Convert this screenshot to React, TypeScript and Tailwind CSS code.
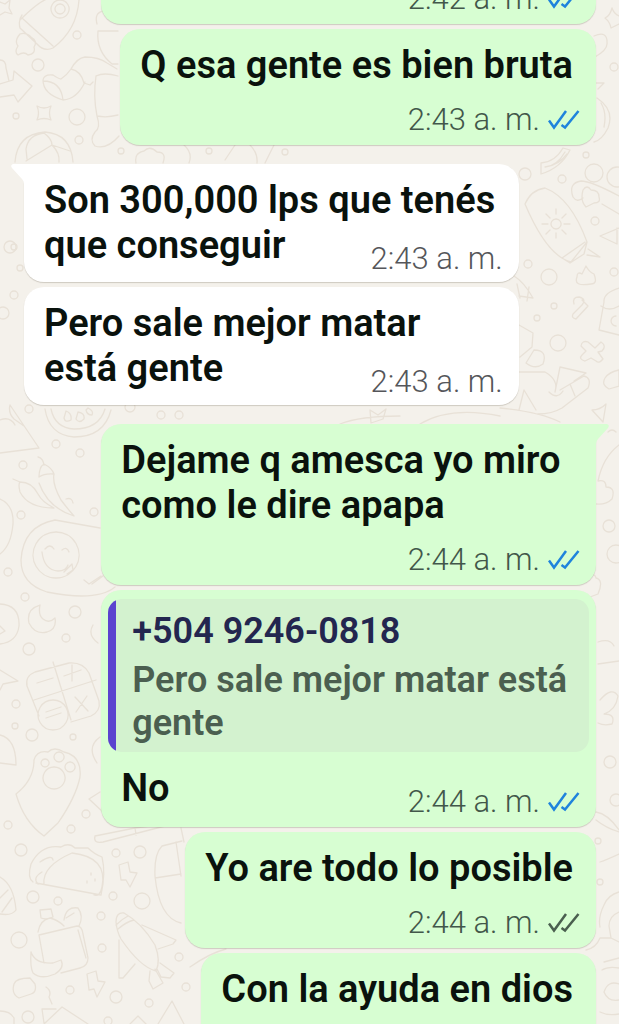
import type { ReactNode } from 'react';

type TickState = 'read' | 'delivered';

interface BubbleProps {
    lines?: string[];
    time?: string;
    sent?: boolean;
    tail?: boolean;
    inlineTime?: boolean; // time shares the last text line
    ticks?: TickState;
    className?: string;
    children?: ReactNode;
}

function Ticks({ state }: { state: TickState }) {
    return (
        <svg
            viewBox="0 0 32 20"
            role="img"
            aria-label={state === 'read' ? 'Leído' : 'Entregado'}
            className={`h-5 w-8 shrink-0 ${state === 'read' ? 'text-[#1f83dc]' : 'text-[#4a5f4f]'}`}
            fill="none"
            stroke="currentColor"
            strokeWidth="2.5"
        >
            <path d="M1 10.5 6 17.5 18 1M13.5 15 17 17.5 30.5 1" />
        </svg>
    );
}

function Tail({ sent }: { sent: boolean }) {
    return (
        <svg
            viewBox="0 0 15 20"
            aria-hidden="true"
            className={`absolute top-0 h-5 w-[15px] ${sent ? '-right-[14px] text-[#d7fed2]' : '-left-[14px] -scale-x-100 text-white'}`}
            fill="currentColor"
        >
            <path d="M0 0H12Q15 1 13 4L3 15Q1 17 1 20H0Z" />
        </svg>
    );
}

function Bubble({
    lines,
    time,
    sent = false,
    tail = false,
    inlineTime = false,
    ticks,
    className = '',
    children
}: BubbleProps) {
    return (
        <li
            className={`
                relative flex flex-col rounded-[20px] shadow-[0_1px_1px_rgba(60,50,30,0.2)]
                ${sent ? 'self-end bg-[#d7fed2] pb-[7px]' : 'self-start bg-white pb-[5px]'}
                ${tail ? (sent ? 'rounded-tr-none' : 'rounded-tl-none') : ''}
                ${className}
            `}
        >
            {tail && <Tail sent={sent} />}
            {children}
            {lines && (
                <p className="mt-[14px] pr-[23px] pl-5 text-[38px] leading-[45px] font-semibold text-[#0a120d]">
                    {lines.map((line) => (
                        <span key={line} className="block w-fit">{line}</span>
                    ))}
                </p>
            )}
            {time && (
                <div
                    className={`
                        flex items-center justify-end gap-2 pr-4 text-[31px] leading-9 font-light
                        ${sent ? 'text-[#42574a]' : 'text-[#55565a]'}
                        ${inlineTime ? '-mt-[27px]' : 'mt-[14px]'}
                    `}
                >
                    <time>{time}</time>
                    {ticks && <Ticks state={ticks} />}
                </div>
            )}
        </li>
    );
}

function Quote({ author, text }: { author: string; text: string }) {
    return (
        <blockquote className="mx-[7px] mt-[9px] flex overflow-hidden rounded-[14px] bg-[#d3f2cf] text-[36px] leading-[43px] font-semibold">
            <div className="w-2 shrink-0 bg-[#5b43cf]" />
            <div className="pt-[11px] pb-[7px] pl-4">
                <cite className="block text-[#23264f] not-italic">{author}</cite>
                <p className="mt-[6px] text-[#4b5f50]">{text}</p>
            </div>
        </blockquote>
    );
}

// Small circles scattered over the wallpaper: x, y, radius
const DOTS = [
    [77, 35, 4], [38, 65, 6], [77, 117, 8], [16, 116, 3], [79, 140, 4], [121, 151, 3], [209, 151, 3], [285, 152, 3],
    [14, 247, 3], [10, 247, 6], [20, 268, 3], [14, 295, 4], [3, 313, 6],
    [525, 174, 6], [562, 179, 4], [594, 173, 9], [617, 177, 10], [595, 221, 4], [549, 277, 8], [528, 264, 4],
    [614, 272, 4], [554, 306, 3], [537, 318, 3], [558, 343, 8], [586, 155, 3], [614, 67, 4],
    [29, 409, 4], [56, 444, 4], [80, 453, 4], [23, 465, 4], [161, 415, 4], [179, 415, 4], [130, 407, 5],
    [21, 515, 4], [94, 512, 4], [8, 572, 4], [25, 597, 4], [75, 612, 6], [66, 638, 4], [29, 649, 6],
    [16, 704, 4], [15, 726, 3], [32, 735, 6], [73, 737, 3], [86, 814, 4], [8, 825, 4], [71, 829, 4],
    [21, 850, 6], [116, 853, 4], [140, 852, 6], [113, 896, 4], [142, 901, 8], [33, 897, 6], [58, 901, 4],
    [101, 916, 4], [19, 940, 8], [102, 948, 4], [179, 957, 4], [116, 997, 6], [70, 990, 4], [149, 1003, 4],
    [186, 987, 4], [28, 1017, 6], [108, 1021, 4], [609, 526, 6], [610, 762, 6], [616, 800, 6], [598, 841, 3],
    [600, 882, 3], [616, 554, 9]
];

const DOODLES = [
    // rocket
    'M20 20Q40 0 50-2M79 0Q77 30 53 48 44 52 37 44L20 28Q18 20 22 15M22 18 53 46M60 0a9 9 0 1 0 .1 0M60 4a5 5 0 1 0 .1 0M20 34q-6 7-2 12-4 6 0 9 6-4 10 0 8-1 6-8 4-6-3-10-5-5-11-3',
    // star and arrow
    'M0 2l5 2 5-4-1 8 3 6-7-2-5 3M0 84 13 80 14 71 32 86 18 102 14 95 0 97M0 60q6 0 6 8l3 13',
    // sock
    'M43 80q1-6 10-5 6 4 8 4 6-4 10-10 6-11 14-12 14 0 22 6l10 6M43 80q0 14 20 20 14-1 22-18M43 81q18 0 20 19M71 69q10 2 13 14l6 2 3-3',
    // bottle
    'M98 31h20M98 31q-2 20 14 33l6 0M97 24q-3-11 6-13l5 6M96 76q8-4 22 0M96 76q-3 20 1 40 10 2 21-1M97 116q4 12-2 16-6 8 0 14 12 4 24-10',
    // sparkle and ball
    'M37 106q7 4 14 0-3 7 0 14-7-3-14 0 3-7 0-14M15 162q2-28 30-30 26 2 28 30M26 149q2-14 18-16 8 6 8 12l-26 16M52 145l18 6M52 145q8 8 7 17M26 149l1 10',
    'M136 163q-2-10 8-12 6-6 13 1 10 0 6 11M184 145q9 8 5 18M225 160l10-15M250 145q8 8 7 18M265 163l9-18',
    // right side, top
    'M612 8q2 6 7 8M612 8q-2 8-7 10 5 4 6 10l8-4M594 36q14-6 13 8 0 6-12 13M596 83l8 0-6 6M597 98q18 12 11 30-6 12-14 14M601 103q6 10 3 24M565 152q-8 14-20 15 14-2 22-13',
    'M541 163l0 11q20-6 29-24l-7-2q-8 14-22 15',
    // lotion tube
    'M525 204q6-14 20-16 26 10 42 54l-16 20q-24-6-46-58M587 242l-3 12-14 9-8-5 23-16M588 249l12 8-13-2M556 219a5 5 0 1 0 .1 0M556 209v5M556 233v5M542 224h6M564 224h6M546 214l4 4M566 214l-4 4M546 234l4-4M566 234l-4-4',
    // carrot, cloud, pills
    'M573 197q-5-14 8-16 10 0 38 15M573 197q4 6 10 1M583 190q4-6 8 0 8 0 8 7 2 6-5 6l-8 4q-6-6-3-17M602 204l17 10M600 236l19-8M600 236l17 8v-16M577 277q0-6 5-3l4-8q3 6 8 8 4 10-3 10-18 3-14-7',
    'M574 304q-2-7 5-7 8 2 3 8M582 300l6 6-12 13q-5-1-3-5l9-9M588 342l7 6 6-6q6 4 1 9l-4 1 5 7q-4 5-7 2l-5-3-6 3q-7-2-3-6l4-4-5-5q1-6 7-4',
    'M619 288q-16 5-15 14l-5 28 20 5M601 306q8 6 18 0M616 316a5 5 0 1 0 .1 10M605 378q4-6 14-8v16l-10 3q-8-4-4-11',
    // party hat, high heel
    'M514 276q10 6 19 22l-14-2M520 298l-3-14M527 301l2-14M519 325l14 8-1 14-12 10M534 350q14 0 9 14-8 6-17-1l8-13M519 372h26q14 8 10 20M549 392q8 8 14-1M555 392l5-25 26 6-12 8M519 410l5-20 12 20M560 390l24-14q8 2 4 12l-26 20q-10 6-24 6M570 384l5 12M592 410q8 0 14-6l-3 18z',
    'M340 424q20-8 60-8M420 424q30-18 80-8M500 408q40 4 60 14M370 410l8 5 8-6-3 10-12 4z',
    // pizza and melon
    'M10 405 39 448 0 453M10 405q-2 8 4 14l10 7M0 420q10-4 15 5M45 409q4 26 29 28 30 0 37-27M51 409q4 19 23 20 25 0 31-20M66 411q6 2 5 9-6 3-7-2zM78 412q7 1 6 7-5 5-8 0zM88 408q6 3 4 7-5 0-6-5z',
    // chillies
    'M38 457q5 1 6 8M39 477q0-10 5-13 8 4 10 10-2 10 7 26 6 8 13 16-26-8-35-33M39 477q6-4 15-3M13 479l7 3q12 0 18 12 4 8 16 14-26 0-34-16-2-8 0-10M66 499q6-2 7 4',
    'M0 499q14 6 13 25-2 22-13 30M100 528 55 520q-32 6-34 40 0 24 26 32 50 10 68-5M56 532a23 23 0 1 0 .1 0M42 552q2 18 16 19 8 0 10-6M45 549q5-6 9 0M62 550q5-4 7 2M64 572l8-8 1 6-6 4M84 580l5 4 12-8M92 584l11-8',
    // moon, hat
    'M40 605q-14 4-11 18 6 12 18 9 10-3 8-14-6 6-12 1-5-4-3-14M0 604q20 1 19 22-2 16-19 18M0 626l5 5-5 3M0 670l18 11-15 3-3 6M0 735q16 4 16 30L0 763M93 625q-6 10 5 18',
    // calculator
    'M27 686q-2-10 8-14l34-9q14-1 20 10l10 28q2 10-8 15l-20 6M27 686l12 30M53 662l18 58M34 700l62-20M37 683l16-5M72 665v16M64 676l17-6M75 697l13 14M87 696l-11 16M53 700a15 15 0 1 0 .1 0M46 712l15-5M46 718l15-5',
    // paw
    'M16 794q18-14 18-34 3-10 14-8 6-6 16 0 18 4 16 25-4 20-22 46l-14 13Q24 822 16 794M54 767a11 11 0 1 0 .1 0M45 759a4 4 0 1 0 .1 0M59 752a5 5 0 1 0 .1 0M70 762a5 5 0 1 0 .1 0M100 737q-14 10-3 26M100 792l-11 7 15 14',
    // taco, bat
    'M33 882q-6-4-2-18 10-20 30-17 8-5 14 1l13 0q6 6 14 9 4 16-1 38l-65-12M44 884q-2-18 28-31 36 4 30 34-2 10-8 8M42 872q-10 6-4 12M40 862q12-8 13-2M91 873v2M95 879v2M87 881v2M95 836l40-8 30-4M95 836q-2 8 8 6l62-16M135 828l1 7',
    'M119 865l9-3 2 10 7 1-7 14-4-7-5 0zM87 974l9-3 2 10 7 1-8 15-3-8-5 1zM182 841l-20 5q-8 8-7 30 4 42 26 47M155 878l26-4M176 842l5 34M181 828l3 14M0 877q14 8 16 33-4 6-16 4M0 898l8-8M2 912l10-14',
    // school bag
    'M39 935l38-9q5 0 6 8l5 24q0 8-8 10l-19 5M39 935l5 28M38 932q2-12 12-14 8 2 14 8M40 910l11-1 2 8q-6 3-12 1zM64 920q2-14 14-12 6 8 1 18M66 918l8-5M31 952q4 12 22 11l8-3q4 8-6 14-14 6-22-1-3-6-2-21M78 930l8 28',
    // rocket plane
    'M116 922q0-10 8-9 18 10 31 32 6 16 1 26-16-4-35-32-4-7-5-17M116 925q6-6 12-9M118 929q8-7 16-9M142 925l34 15-3 4-15 5M119 940v38l4 0 12-14M150 971l-1 10 4 8 10-6-8-14M160 963l14 10-4 5-9-1-4-8',
    'M14 984q2-6 16-6l5 6q2 8-4 10l-12 4q-8-4-5-14M46 987q6 4 3 10l3 7M42 1009l14 0M44 1024l18-17 26 17M42 1009l2 14M130 1024l8-8 8 8M158 1024l14-23 12 23M190 967q20-14 36-18M0 1011q10 0 14 7v6',
    // right side, bottom
    'M619 445q-16 12-21 36 8-2 8 6 10 0 6 12-6 6-16 5M608 432q4-4 8 0M586 582q8-12 10-4 8 2 2 16l-8 3M598 642q12-4 16 4M598 664l21-3M600 700q12-14 18-4-2 14-14 18 12 0 8 10-8 2-14-1M596 812q12 2 23 18M596 820q10 8 23 12M600 862q6-2 19-8M604 905q4-10 15-13M604 905q-6 12-4 22M619 912q-10 4-10 14l2 12 8 4M586 950q10-2 14-12l11 0M604 962l15-4M602 970q6-4 17-2M604 992q4-12 15-8M604 992q4 10 15 8M600 1012q8 4 19 2'
];

function Wallpaper() {
    return (
        <svg
            aria-hidden="true"
            viewBox="0 0 619 1024"
            preserveAspectRatio="xMinYMin slice"
            className="absolute inset-0 size-full"
            fill="none"
            stroke="#e8e1d7"
            strokeWidth="1.3"
            strokeLinejoin="round"
            strokeLinecap="round"
        >
            {DOODLES.map((d, index) => (
                <path key={index} d={d} />
            ))}
            {DOTS.map(([cx, cy, r], index) => (
                <circle key={index} cx={cx} cy={cy} r={r} />
            ))}
        </svg>
    );
}

export default function App() {
    return (
        <main className="relative h-screen overflow-hidden bg-[#f4f1eb] font-[Roboto,sans-serif]">
            <Wallpaper />
            <ol className="relative flex flex-col gap-[5px] pr-[23px] pl-6">
                <Bubble sent time="2:42 a. m." ticks="read" className="-mt-[33px] w-[86.5%]" />
                <Bubble sent lines={['Q esa gente es bien bruta']} time="2:43 a. m." ticks="read" />
                <Bubble
                    tail
                    inlineTime
                    lines={['Son 300,000 lps que tenés', 'que conseguir']}
                    time="2:43 a. m."
                    className="mt-[14px] w-[86.5%]"
                />
                <Bubble
                    inlineTime
                    lines={['Pero sale mejor matar', 'está gente']}
                    time="2:43 a. m."
                    className="w-[86.5%]"
                />
                <Bubble
                    sent
                    tail
                    lines={['Dejame q amesca yo miro', 'como le dire apapa']}
                    time="2:44 a. m."
                    ticks="read"
                    className="mt-[14px] w-[86.5%]"
                />
                <Bubble sent inlineTime lines={['No']} time="2:44 a. m." ticks="read" className="w-[86.5%]">
                    <Quote author="+504 9246-0818" text="Pero sale mejor matar está gente" />
                </Bubble>
                <Bubble sent lines={['Yo are todo lo posible']} time="2:44 a. m." ticks="delivered" />
                <Bubble sent lines={['Con la ayuda en dios']} className="min-h-[116px]" />
            </ol>
        </main>
    );
}
